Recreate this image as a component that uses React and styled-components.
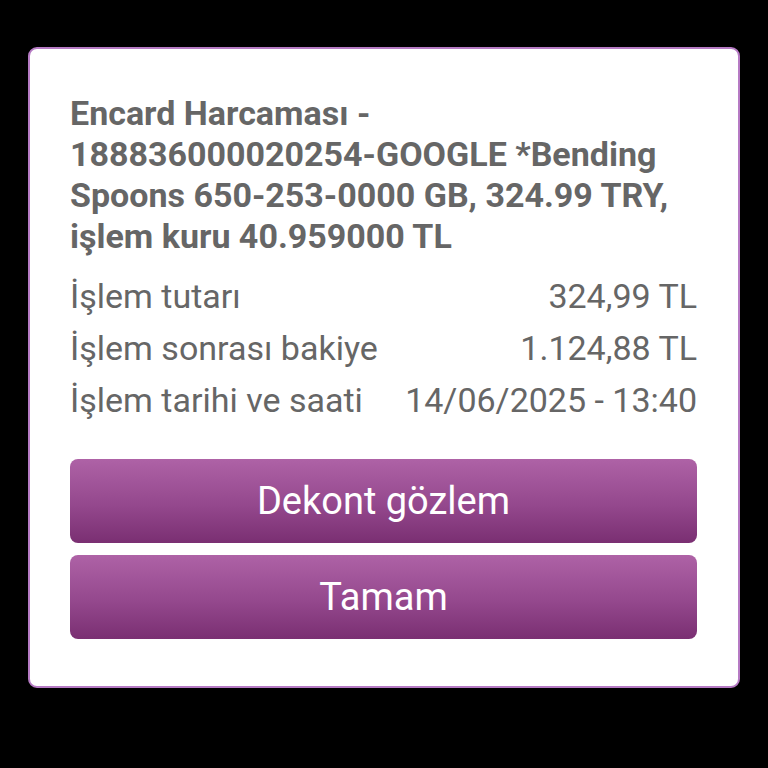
import styled, { createGlobalStyle } from "styled-components";

const GlobalStyle = createGlobalStyle`
    html, body {
        margin: 0;
        padding: 0;
        background: #000;
    }
    body {
        font-family: Roboto, "Noto Sans", sans-serif;
    }
`

const Screen = styled.main`
    width: 768px;
    height: 768px;
    background: #000;
    padding: 47px 28px 0 28px;
    box-sizing: border-box;
`

const Card = styled.section`
    background: #fff;
    border: 2px solid #b67bc4;
    border-radius: 9px;
    height: 641px;
    box-sizing: border-box;
    padding: 44px 41px 0 40px;
    display: flex;
    flex-direction: column;
`

const Title = styled.h2`
    margin: 0;
    color: #666;
    font-size: 34px;
    font-weight: 700;
    line-height: 41px;
    white-space: nowrap;
`

const Details = styled.div`
    margin-top: 13px;
    display: flex;
    flex-direction: column;
`

const Row = styled.div`
    display: flex;
    justify-content: space-between;
    align-items: center;
    height: 52px;
    color: #666;
    font-size: 34px;
`

const Actions = styled.div`
    margin-top: 33px;
    display: flex;
    flex-direction: column;
    gap: 12px;
`

const Button = styled.button`
    height: 84px;
    border: none;
    border-radius: 8px;
    background: linear-gradient(to bottom, #ae62a6 0%, #94488d 55%, #7a2f72 100%);
    color: #fff;
    font-family: Roboto, "Noto Sans", sans-serif;
    font-size: 38px;
    cursor: pointer;
`

const titleLines = [
    'Encard Harcaması -',
    '188836000020254-GOOGLE *Bending',
    'Spoons 650-253-0000 GB, 324.99 TRY,',
    'işlem kuru 40.959000 TL',
]

const details = [
    ['İşlem tutarı', '324,99 TL'],
    ['İşlem sonrası bakiye', '1.124,88 TL'],
    ['İşlem tarihi ve saati', '14/06/2025 - 13:40'],
]

export default function App() {
    return (
        <>
            <GlobalStyle />
            <Screen>
                <Card>
                    <Title>
                        {titleLines.map((line, i) => (
                            <span key={i}>{line}{i < titleLines.length - 1 && <br />}</span>
                        ))}
                    </Title>
                    <Details>
                        {details.map(([label, value]) => (
                            <Row key={label}>
                                <span>{label}</span>
                                <span>{value}</span>
                            </Row>
                        ))}
                    </Details>
                    <Actions>
                        <Button>Dekont gözlem</Button>
                        <Button>Tamam</Button>
                    </Actions>
                </Card>
            </Screen>
        </>
    )
}
